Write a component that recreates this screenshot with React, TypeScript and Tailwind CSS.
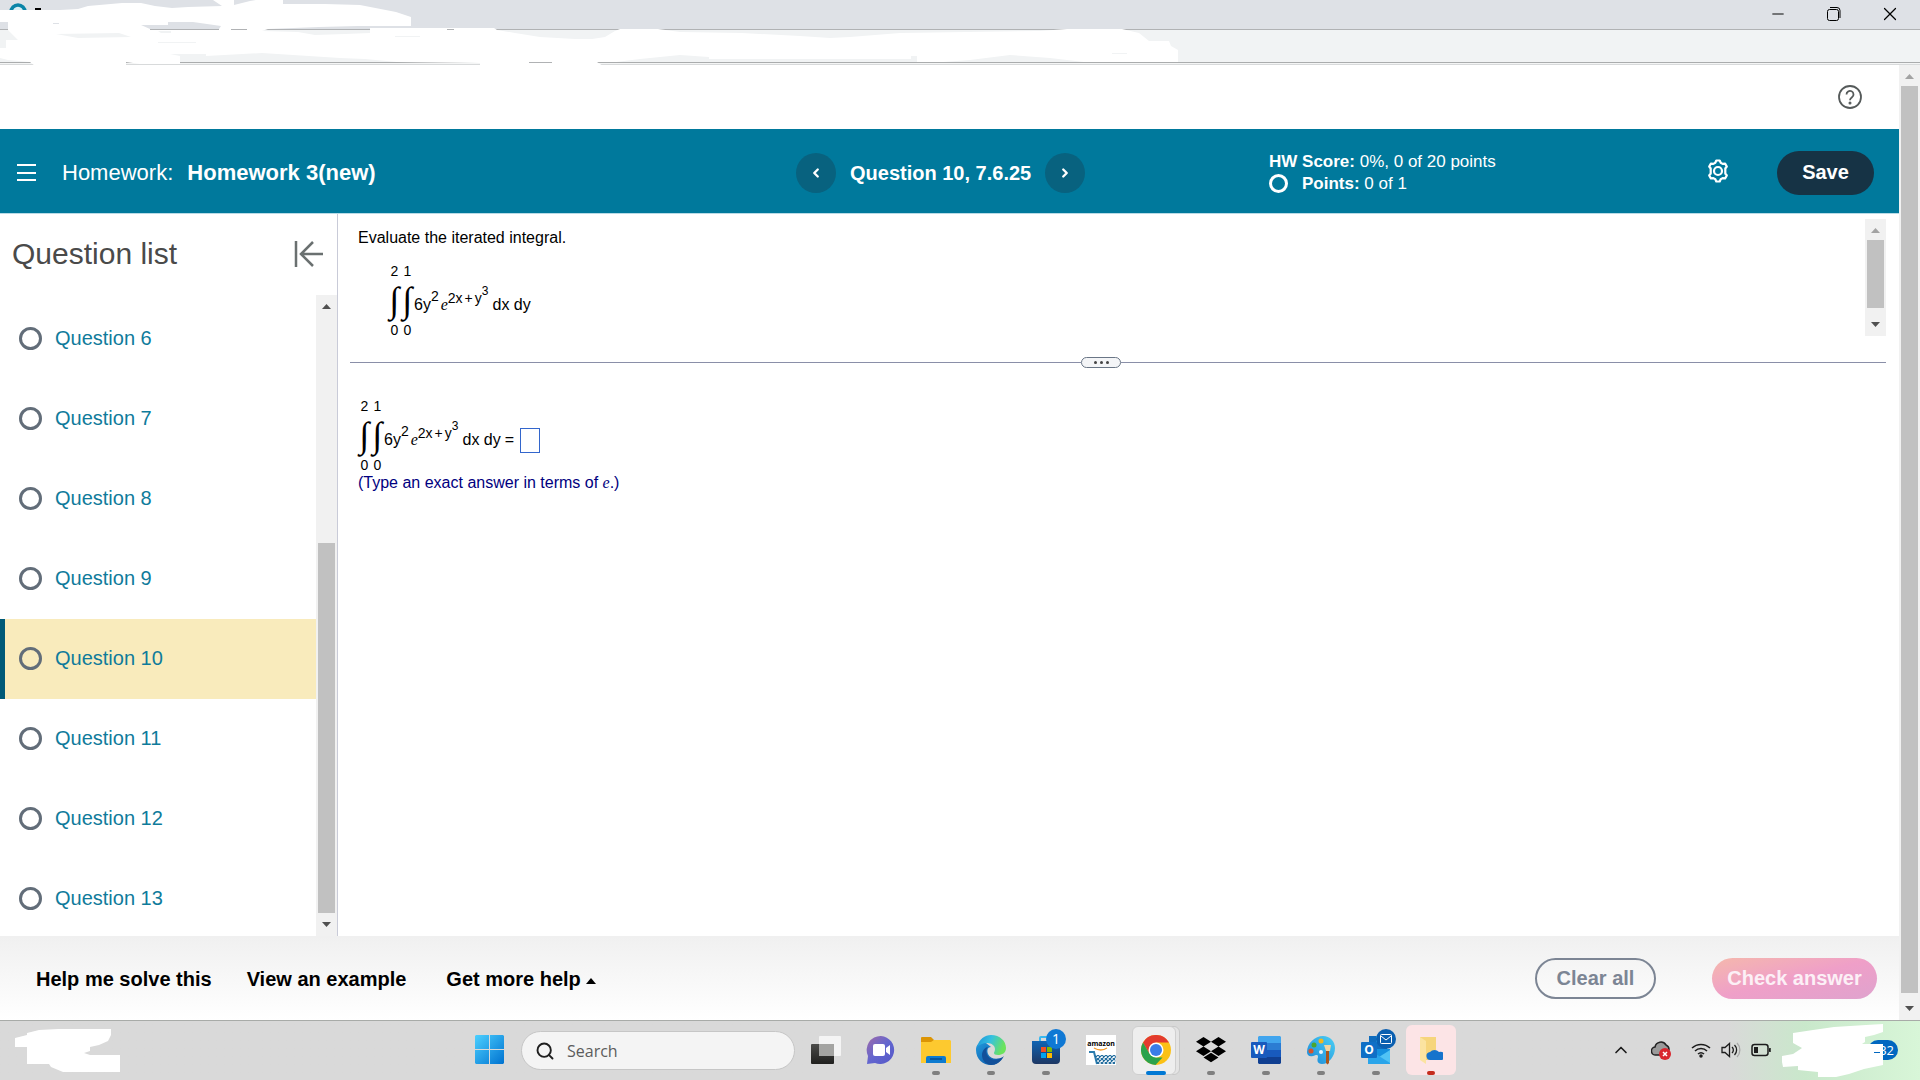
import { ReactNode } from 'react';
import { ChevronLeft, ChevronRight, ChevronUp, Minus, Search, X } from 'lucide-react';

const questions = [6, 7, 8, 9, 10, 11, 12, 13];
const activeQuestion = 10;

interface ScrollbarProps {
  before: number; // free track above the thumb
  thumb: number;
  after: number; // free track below the thumb
  atTop?: boolean;
}

const Scrollbar = ({ before, thumb, after, atTop }: ScrollbarProps) => (
  <div className="w-[21px] shrink-0 flex flex-col items-center bg-[#f1f1f1]">
    <svg width="21" height="21" className="shrink-0">
      <path d="M6 14h9L10.500 9z" fill={atTop ? '#a3a3a3' : '#505050'} />
    </svg>
    <div style={{ flexGrow: before }} />
    <div className="w-[17px] bg-[#c1c1c1]" style={{ flexGrow: thumb }} />
    <div style={{ flexGrow: after }} />
    <svg width="21" height="21" className="shrink-0">
      <path d="M6 7h9l-4.500 5z" fill="#505050" />
    </svg>
  </div>
);

const Integral = ({ from, to }: { from: string; to: string }) => (
  <span className="w-[13px] flex flex-col items-center text-sm leading-[14px]">
    <span>{to}</span>
    <span className="h-[45px] flex items-center font-['Liberation_Serif',serif] text-4xl leading-[45px]">∫</span>
    <span>{from}</span>
  </span>
);

const Expression = ({ children }: { children?: ReactNode }) => (
  <div className="flex items-center text-base">
    <Integral from="0" to="2" />
    <Integral from="0" to="1" />
    <span className="whitespace-nowrap leading-7 pt-[3px]">
      6y<span className="align-[9px] text-sm leading-none">2</span>
      <span className="font-['Liberation_Serif',serif] italic ml-0.5">e</span>
      <span className="align-[7px] text-sm leading-none">
        2x<span className="mx-0.5">+</span>y
      </span>
      <span className="align-[15px] text-xs leading-none">3</span>
      <span className="ml-1">dx dy</span>
      {children}
    </span>
  </div>
);

/* 브라우저 상단 바 */
const BrowserBar = () => (
  <div className="relative shrink-0">
    <div className="h-[30px] bg-[#dee1e6] border-b border-[#b0b2b4] flex items-start justify-end pr-0.5">
      <button aria-label="Minimize" className="w-14 h-7 flex items-center justify-center">
        <Minus className="w-[18px] h-[18px]" strokeWidth={1.3} />
      </button>
      <button aria-label="Restore" className="w-14 h-7 flex items-center justify-center">
        <svg width="14" height="14" fill="none" stroke="#000">
          <rect x="0.500" y="2.500" width="11" height="11" rx="2" />
          <path d="M3 .5h7a3 3 0 0 1 3 3V11" />
        </svg>
      </button>
      <button aria-label="Close" className="w-14 h-7 flex items-center justify-center">
        <X className="w-[22px] h-[22px]" strokeWidth={1.3} />
      </button>
    </div>
    <div className="h-[33px] bg-[#f1f3f4] border-b border-[#aaacad]" />
    <div className="h-0.5 bg-[#f4f5f5] border-b border-[#d8dadb]" />
    <svg width="1200" height="66" className="absolute left-0 top-0 pointer-events-none">
      <circle cx="18" cy="12" r="7" fill="#d7eef4" stroke="#0a84a8" strokeWidth="3.500" />
      <path d="M35 8h6v2h-6z" />
      <path
        fill="#fff"
        d="M0 10H33L43 10H60L78 9 88 6 122 3H141L155 6 172 8 188 7 222 6 213 0H234V5L250 1 256 0H283V4L325 4 360 5 396 12 411 17V26L358 26 319 27 268 29 262 31 298 32 315 35 345 34 370 33V28H494L497 30 515 33 540 37 575 39H592L605 37 615 31 620 29H658L680 32 742 33 800 36 830 38 850 37 900 33 1040 31 1067 29H1122L1139 33 1149 41H1169L1171 46 1178 50V62H1084L1050 58 1010 55 970 60 943 62H917V56H911V59H709V57L680 55 640 59 616 62H597L603 66H480V63L397 62 365 59 340 58 262 53 206 56V54H170L180 56V64H140L126 62V66H35L30 62 8 60 0 58V48H6V40H18L8 30V22H0z"
      />
      <path fill="#dee1e6" d="M141 25H168V22H193L221 26 219 29H150zM53 23h6v1h-6z" />
      <path fill="#b0b2b4" d="M150 29H219V30H150zM231 29h16v1h-16zM447 29h7v1h-7zM529 62h23v1h-23z" />
      <path fill="#f1f3f4" d="M56 34 119 33 131 37 78 38zM158 42h38v1h-38zM158 31h13v2h-10zM395 36h25v1h-25zM1112 53h15v1h-15z" />
    </svg>
  </div>
);

const Header = () => (
  <header className="h-[85px] shrink-0 bg-[#00799c] border-b border-[#b9dbe6] pt-[3px] grid grid-cols-[796fr_473fr_630fr] items-center text-white">
    <div className="flex items-center pl-[17px]">
      <button aria-label="Menu" className="w-[19px] h-[17px] flex flex-col justify-between">
        <span className="block w-full h-0.5 bg-white" />
        <span className="block w-full h-0.5 bg-white" />
        <span className="block w-full h-0.5 bg-white" />
      </button>
      <h1 className="ml-[26px] text-[22px] leading-7">
        Homework: <b className="ml-2">Homework 3(new)</b>
      </h1>
    </div>
    <div className="flex items-center gap-3.5">
      <button aria-label="Previous question" className="size-10 rounded-full bg-[#08627f] flex items-center justify-center">
        <ChevronLeft className="size-3.5" strokeWidth={4} />
      </button>
      <span className="text-xl font-bold">Question 10, 7.6.25</span>
      <button aria-label="Next question" className="size-10 rounded-full bg-[#08627f] flex items-center justify-center">
        <ChevronRight className="size-3.5" strokeWidth={4} />
      </button>
    </div>
    <div className="flex items-center pr-[25px]">
      <div className="text-[17px] leading-[22px]">
        <p><b>HW Score:</b> 0%, 0 of 20 points</p>
        <p className="flex items-center">
          <span className="size-[19px] mr-3.5 rounded-full border-[3px] border-white" />
          <span><b>Points:</b> 0 of 1</span>
        </p>
      </div>
      <button aria-label="Settings" className="ml-auto mr-[47px] mb-[3px]">
        <svg width="24" height="24" viewBox="0 0 24 24" fill="none" stroke="currentColor" strokeWidth="2.200" strokeLinejoin="round">
          <path d="M9.300 3.800 10.300 1.500h3.400l1 2.300 1.900 1.100 2.500-.3 1.700 2.900-1.500 2V14.500l1.500 2-1.700 2.900-2.500-.3-1.900 1.100-1 2.300h-3.400l-1-2.300-1.900-1.100-2.500.3-1.700-2.900 1.500-2v-5l-1.500-2 1.700-2.900 2.500.3z" />
          <circle cx="12" cy="12" r="4" />
        </svg>
      </button>
      <button className="w-[97px] h-11 rounded-full bg-[#163345] pb-0.5 text-xl font-bold">Save</button>
    </div>
  </header>
);

const Sidebar = () => (
  <aside className="w-[338px] shrink-0 border-r border-[#c9cbd8] flex flex-col">
    <div className="h-[81px] shrink-0 pl-3 pr-3.5 pb-0.5 flex items-center justify-between text-[#4a4a4a]">
      <h2 className="text-3xl">Question list</h2>
      <button aria-label="Collapse list">
        <svg width="29" height="26" fill="none" stroke="#6a7070" strokeWidth="2.500">
          <path d="M2 0v26M19 1 7 13l12 12M7 13h22" />
        </svg>
      </button>
    </div>
    <div className="flex-1 min-h-0 flex">
      <ul className="flex-1 overflow-hidden pt-1">
        {questions.map((q) => (
          <li key={q}>
            <a
              href={`#q${q}`}
              className={
                q === activeQuestion
                  ? 'h-20 pl-3.5 pb-0.5 flex items-center gap-[13px] border-l-5 border-[#005a78] bg-[#f9ebbc] text-xl text-[#0f7b9b]'
                  : 'h-20 pl-3.5 pb-0.5 flex items-center gap-[13px] border-l-5 border-transparent text-xl text-[#0f7b9b]'
              }
            >
              <span className="size-[23px] rounded-full border-[3px] border-[#626d79]" />
              Question {q}
            </a>
          </li>
        ))}
      </ul>
      <Scrollbar before={227} thumb={370} after={2} />
    </div>
  </aside>
);

const Worksheet = () => (
  <main className="flex-1 pl-3 pr-[13px] pt-[5px] text-black">
    <section className="flex h-[117px]">
      <div className="flex-1 pl-2 pt-[9px]">
        <p className="text-base leading-5">Evaluate the iterated integral.</p>
        <div className="pl-[30px] pt-4">
          <Expression />
        </div>
      </div>
      <Scrollbar before={0} thumb={68} after={7} atTop />
    </section>
    <div className="mt-5 h-3 flex items-center">
      <div className="flex-1 h-px bg-[#8a8fa8]" />
      <button aria-label="Resize" className="w-10 h-[11px] rounded-full border border-[#6a7686] bg-[#f4f5f7] flex items-center justify-center gap-[3px]">
        <span className="size-[3px] rounded-full bg-[#444]" />
        <span className="size-[3px] rounded-full bg-[#444]" />
        <span className="size-[3px] rounded-full bg-[#444]" />
      </button>
      <div className="w-[765px] h-px bg-[#8a8fa8]" />
    </div>
    <section className="pl-2 pt-[31px]">
      <Expression>
        <label htmlFor="answer" className="ml-1">=</label>
        <input id="answer" className="ml-1.5 w-5 h-[25px] border border-[#3366cc] bg-white align-middle" />
      </Expression>
      <p className="pt-px text-base leading-5 text-[#000080]">
        (Type an exact answer in terms of <i className="font-['Liberation_Serif',serif]">e</i>.)
      </p>
    </section>
  </main>
);

const Footer = () => (
  <footer className="h-[84px] shrink-0 flex items-center pl-9 pr-[22px] bg-linear-to-b from-[#f0f0f0] to-white text-xl font-bold text-black">
    <button className="pt-0.5">Help me solve this</button>
    <button className="pt-0.5 ml-[35px]">View an example</button>
    <button className="pt-0.5 ml-10 flex items-center">
      Get more help
      <svg width="10" height="6" className="ml-[5px] mt-1"><path d="M0 6h10L5 0z" /></svg>
    </button>
    <button className="ml-auto w-[121px] h-[41px] rounded-full border-2 border-[#7c8594] text-[#7c8594]">Clear all</button>
    <button className="ml-14 w-[165px] h-[41px] rounded-full bg-linear-to-br from-[#f5b8ac] via-[#ef9fc8] to-[#dfa3ce] text-[#fcf0f6]">
      Check answer
    </button>
  </footer>
);

interface TaskIconProps {
  label: string;
  dot?: boolean;
  children: ReactNode;
}

const TaskIcon = ({ label, dot, children }: TaskIconProps) => (
  <button aria-label={label} className="relative w-[55px] h-full pb-0.5 flex items-center justify-center">
    {children}
    {dot && <span className="absolute bottom-[5px] w-2 h-1 rounded-full bg-[#7f7f7f]" />}
  </button>
);

/* 작업 표시줄 */
const Taskbar = () => (
  <div className="h-[60px] shrink-0 border-t border-[#a8aba8] bg-[#d9d9d9] bg-linear-to-r from-[#d9d9d9] from-90% via-[#c9e8cb] via-94% to-[#d8f6d8] grid grid-cols-[1fr_auto_1fr] font-['Open_Sans','Noto_Sans',sans-serif]">
    <div className="pl-[15px] flex items-center">
      <svg width="106" height="44" fill="#fff">
        <path d="M0 9 12 6V4L24 1 43 0H96V6L93 12 84 16 75 18V22L69 24 75 26H105V43H48L36 38 34 35H12V18H0z" />
      </svg>
    </div>

    <div className="flex items-center">
      <TaskIcon label="Start">
        <svg width="29" height="29">
          <defs>
            <linearGradient id="win" x1="0" y1="0" x2="1" y2="1" gradientUnits="objectBoundingBox">
              <stop offset="0" stopColor="#4cd0ff" /><stop offset="1" stopColor="#0072d0" />
            </linearGradient>
          </defs>
          <path fill="url(#win)" d="M1 0h13v14H0V1zM15 0h13l1 1v13H15zM0 15h14v14H1l-1-1zM15 15h14v13l-1 1H15z" />
        </svg>
      </TaskIcon>
      <label className="ml-1 mr-[3px] w-[274px] h-[39px] rounded-full bg-[#f4f4f4] border border-[#c6c6c6] flex items-center pl-[13px] pr-3">
        <Search className="size-5 shrink-0 text-[#1f1f1f]" strokeWidth={2.3} />
        <input
          placeholder="Search"
          aria-label="Search"
          className="ml-3 w-full bg-transparent text-base placeholder:text-[#5c5c5c] outline-none"
        />
      </label>

      <TaskIcon label="Task view">
        <svg width="30" height="30">
          <defs>
            <linearGradient id="tv" x1="0" y1="0" x2="0" y2="1"><stop stopColor="#4a4a48" /><stop offset="1" stopColor="#20201e" /></linearGradient>
          </defs>
          <rect x="0" y="9" width="23" height="20" rx="1" fill="url(#tv)" />
          <rect x="8" y="1" width="22" height="20" rx="1" fill="#f4f4f4" />
          <path d="M8 9h15v12H8z" fill="#a4a4a2" />
        </svg>
      </TaskIcon>
      <TaskIcon label="Chat">
        <svg width="30" height="30">
          <defs>
            <linearGradient id="chat" x1="0" y1="0" x2="1" y2="1">
              <stop stopColor="#a06aa8" /><stop offset=".5" stopColor="#6366cf" /><stop offset="1" stopColor="#5558c8" />
            </linearGradient>
          </defs>
          <path d="M15 1a14 14 0 1 1-6 27L1 29l1-8A14 14 0 0 1 15 1z" fill="url(#chat)" />
          <rect x="7" y="9" width="12" height="12" rx="2" fill="#fff" />
          <path d="M20 13l4-3v10l-4-3z" fill="#fff" />
        </svg>
      </TaskIcon>
      <TaskIcon label="File Explorer" dot>
        <svg width="30" height="28">
          <path d="M0 2a1 1 0 0 1 1-1h9l3 3-2 5H0z" fill="#dc9505" />
          <path d="M0 6h10l3-2h16l1 1v22H0z" fill="#fdc92f" />
          <path d="M5 27v-5a2 2 0 0 1 2-2h16a2 2 0 0 1 2 2v5z" fill="#0d7bd0" />
          <path d="M9 23h12" stroke="#084a8c" strokeWidth="1.500" />
        </svg>
      </TaskIcon>
      <TaskIcon label="Edge" dot>
        <svg width="30" height="30">
          <defs>
            <linearGradient id="edgeA" x1="0" y1="0" x2="1" y2=".3">
              <stop stopColor="#1a90d8" /><stop offset=".5" stopColor="#35c1e0" /><stop offset="1" stopColor="#6be35c" />
            </linearGradient>
            <linearGradient id="edgeB" x1="0" y1="0" x2="1" y2="1"><stop stopColor="#2098dc" /><stop offset="1" stopColor="#0b4fa0" /></linearGradient>
          </defs>
          <path d="M0 15C0 8 5 7 10 8l5 4c-4 0-4 4-3 7 2 5 9 6 15 3-3 5-7 8-12 8C7 30 0 24 0 15z" fill="url(#edgeB)" />
          <path d="M12 12c-3 3-2 9 3 12 4 2 9 1 13-3-3 6-8 9-13 9-6-1-9-5-9-10 0-4 3-8 6-8z" fill="#12509a" />
          <path d="M1 12C3 4 9 0 15 0c9 0 15 6 15 13 0 5-4 7-8 7-3 0-4-1-4-2s1-2 1-4c0-3-3-6-8-6-4 0-8 2-10 4z" fill="url(#edgeA)" />
        </svg>
      </TaskIcon>
      <TaskIcon label="Store" dot>
        <svg width="30" height="30">
          <defs>
            <linearGradient id="store" x1="0" y1="0" x2="0" y2="1"><stop stopColor="#0f64b4" /><stop offset="1" stopColor="#1d3763" /></linearGradient>
          </defs>
          <path d="M9 7V3a1 1 0 0 1 1-1h10v5" fill="none" stroke="#38b8f0" strokeWidth="2" />
          <path d="M1 6h28v19a4 4 0 0 1-4 4H5a4 4 0 0 1-4-4z" fill="url(#store)" />
          <path d="M10 12h5v5h-5z" fill="#f25022" /><path d="M16 12h5v5h-5z" fill="#7fba00" />
          <path d="M10 18h5v5h-5z" fill="#00a4ef" /><path d="M16 18h5v5h-5z" fill="#ffb900" />
        </svg>
        <span className="absolute top-2 right-[7px] size-5 rounded-full bg-[#0f78d4] text-white text-sm leading-5 text-center">1</span>
      </TaskIcon>
      <TaskIcon label="Amazon">
        <svg width="30" height="30">
          <defs>
            <pattern id="net" width="4" height="4" patternUnits="userSpaceOnUse"><path d="M0 0l4 4M4 0L0 4" stroke="#1d6a9c" strokeWidth="1.200" /></pattern>
          </defs>
          <path d="M0 0h30v30H0z" fill="#fff" />
          <text x="15" y="11" textAnchor="middle" fontSize="7" fontWeight="700">amazon</text>
          <path d="M8 13q7 4 13 0" fill="none" stroke="#f49a2a" strokeWidth="1.300" />
          <path d="M3 17h5l3 12" fill="none" stroke="#2a7cae" strokeWidth="2" />
          <path d="M9 20h21l-1 9H11z" fill="url(#net)" />
        </svg>
      </TaskIcon>
      <button aria-label="Chrome" className="relative w-[55px] h-full pb-0.5 flex items-center justify-center">
        <span className="absolute left-3 top-[5px] w-10 h-[49px] rounded-md bg-[#e4e4e4] border border-[#c8c8c8]" />
        <span className="absolute left-1 top-[5px] w-[44px] h-[49px] rounded-md bg-[#eeeeee] border border-[#cfcfcf]" />
        <svg width="30" height="30" className="relative">
          <circle cx="15" cy="15" r="15" fill="#fbc116" />
          <path d="M2 7.500A15 15 0 0 1 28 7.500H15L8.500 19z" fill="#e33b2e" />
          <path d="M2 7.500 8.500 18.700 15 22.500h6.500L14.500 30A15 15 0 0 1 2 7.500z" fill="#2ba24c" />
          <circle cx="15" cy="15" r="7.500" fill="#fff" />
          <circle cx="15" cy="15" r="6" fill="#3a7de8" />
        </svg>
        <span className="absolute bottom-[5px] w-5 h-1 rounded-full bg-[#0078d4]" />
      </button>
      <TaskIcon label="Dropbox" dot>
        <svg width="30" height="26">
          <path d="M7.500 0 15 4.700 7.500 9.400 0 4.700zM22.500 0 30 4.700 22.500 9.400 15 4.700zM0 14.200 7.500 9.500 15 14.200 7.500 18.900zM22.500 9.500 30 14.200 22.500 18.900 15 14.200zM7.500 20.500 15 15.800l7.500 4.700L15 25.200z" />
        </svg>
      </TaskIcon>
      <TaskIcon label="Word" dot>
        <svg width="30" height="28">
          <path d="M8 0h21l1 1v6H7V1z" fill="#41a5ee" /><path d="M7 7h23v7H7z" fill="#2b7cd3" />
          <path d="M7 14h23v7H7z" fill="#185abd" /><path d="M7 21h23v6l-1 1H8l-1-1z" fill="#103f91" />
          <rect y="6" width="16" height="16" rx="1" fill="#185abd" />
          <text x="8" y="18" textAnchor="middle" fontSize="12" fontWeight="700" fill="#fff">W</text>
        </svg>
      </TaskIcon>
      <TaskIcon label="Paint" dot>
        <svg width="30" height="30">
          <defs><linearGradient id="paint" x1="0" y1="1" x2="1" y2="0"><stop stopColor="#1a86d6" /><stop offset="1" stopColor="#4cd0f4" /></linearGradient></defs>
          <path d="M17 1c7 0 12 5 12 12 0 8-6 16-13 16-5 0-5-4-4-7 0-3-2-2-5-1-4 1-6-1-6-4C1 8 9 1 17 1z" fill="url(#paint)" />
          <circle cx="15" cy="17" r="2" fill="#e8f4fa" />
          <circle cx="15" cy="6" r="2.500" fill="#f4b71c" /><circle cx="8" cy="10" r="2.500" fill="#4ba52e" />
          <circle cx="5" cy="16" r="2.500" fill="#d8542b" />
          <path d="M18 10h7l-1 6h-4z" fill="#f2d3a0" /><path d="M20 16h3v12l-1.500 1.500L20 28z" fill="#a8561c" />
        </svg>
      </TaskIcon>
      <TaskIcon label="Outlook" dot>
        <svg width="30" height="28">
          <path d="M8 0h18v14H8z" fill="#0f6cbd" /><path d="M15 0h11v7H15z" fill="#28a8ea" />
          <path d="M7 13h22v15H7z" fill="#1490df" /><path d="M7 28 29 14v14z" fill="#50c3f5" /><path d="M7 13l22 14v1H7z" fill="#2aa5ea" />
          <rect y="6" width="16" height="16" rx="1" fill="#0f6fc6" />
          <text x="8" y="18" textAnchor="middle" fontSize="12" fontWeight="700" fill="#fff">O</text>
        </svg>
        <svg width="20" height="20" className="absolute top-2 right-[7px]" fill="none" stroke="#fff">
          <circle cx="10" cy="10" r="10" fill="#0a5fb0" stroke="none" />
          <rect x="4.500" y="5.500" width="11" height="9" rx="1" />
          <path d="M5 7l5 4 5-4" />
        </svg>
      </TaskIcon>
      <button aria-label="OneDrive folder" className="relative w-[55px] h-full pb-0.5 flex items-center justify-center">
        <span className="absolute w-[50px] h-[50px] rounded-md bg-[#fce4e6]" />
        <svg width="24" height="28" className="relative">
          <path d="M1 1h16v23H1z" fill="#f6d57c" /><path d="M1 1l6 4v23l-6-4z" fill="#fbe3a0" />
          <path d="M12 24a4 4 0 0 1-1-8 6 6 0 0 1 9 0 4 4 0 0 1 3 8z" fill="#1573cc" />
        </svg>
        <span className="absolute bottom-[5px] w-2 h-1 rounded-full bg-[#c42b1c]" />
      </button>
    </div>

    {/* 시스템 트레이 */}
    <div className="pb-0.5 flex items-center justify-end text-[#1c1c1c]">
      <button aria-label="Show hidden icons" className="mr-5">
        <ChevronUp className="size-5" strokeWidth={2} />
      </button>
      <svg width="20" height="20" className="mr-5">
        <path d="M5 15a4 4 0 0 1-1-8 6 6 0 0 1 11-2 5 5 0 0 1 3 5l-4 5z" fill="#9a9a9a" stroke="#222" strokeWidth="1.500" />
        <circle cx="14" cy="14" r="6" fill="#d9252d" />
        <path d="M12 12l4 4M16 12l-4 4" stroke="#fff" strokeWidth="1.500" />
      </svg>
      <svg width="20" height="16" className="mr-2.5" fill="none" stroke="currentColor" strokeWidth="1.500">
        <path d="M1 6a13 13 0 0 1 18 0M4 9a8.500 8.500 0 0 1 12 0M7 12a4.500 4.500 0 0 1 6 0" />
        <circle cx="10" cy="14" r="1" fill="currentColor" />
      </svg>
      <svg width="20" height="16" className="mr-2.5" fill="none" stroke="currentColor" strokeWidth="1.300">
        <path d="M1 5.500h3L8.500 1.500v13L4 10.500H1zM11 5a4 4 0 0 1 0 6M13.500 3a7 7 0 0 1 0 10" />
        <path d="M16 1a10 10 0 0 1 0 14" stroke="#a9a9a9" />
      </svg>
      <svg width="20" height="14" className="mr-[11px]" fill="none" stroke="currentColor" strokeWidth="1.500">
        <rect x="1" y="1.500" width="16" height="11" rx="2.500" />
        <path d="M3 4h4v6H3zM18 5.500h1v3h-1z" fill="currentColor" stroke="none" />
        <path d="M19 5v4" />
      </svg>
      <div className="relative w-[138px] h-full flex items-center">
        <span className="ml-[86px] w-[30px] h-5 rounded-full bg-[#0067c0] text-white text-[13px] leading-5 pr-1 text-right">32</span>
        <svg width="103" height="56" className="absolute left-0 top-[3px]" fill="#fff">
          <path d="M11 9 31 6 52 3 84 1 101 0V8L92 11 83 13V18L80 20H101V41L82 45 67 50 54 53H36V48L16 46V42L1 43 0 38V32L11 30 20 24 11 19z" />
          <path d="M92 28h6v1h-6z" fill="#0067c0" />
        </svg>
      </div>
    </div>
  </div>
);

export default function App() {
  return (
    <div className="h-screen flex flex-col bg-white font-['Liberation_Sans',Arial,sans-serif] overflow-hidden">
      <BrowserBar />
      <div className="flex-1 min-h-0 flex">
        <div className="flex-1 flex flex-col min-w-0">
          <div className="h-16 shrink-0 flex items-center justify-end pr-[37px]">
            <button aria-label="Help">
              <svg width="24" height="24" fill="none" stroke="#555a5a" strokeWidth="1.800">
                <circle cx="12" cy="12" r="11" />
                <path d="M8.500 9.500a3.500 3.500 0 1 1 5.500 2.800c-1.300 1-2 1.400-2 3" />
                <circle cx="12" cy="18" r=".6" fill="#555a5a" />
              </svg>
            </button>
          </div>
          <Header />
          <div className="flex-1 min-h-0 flex">
            <Sidebar />
            <Worksheet />
          </div>
          <Footer />
        </div>
        <Scrollbar before={0} thumb={907} after={6} atTop />
      </div>
      <Taskbar />
    </div>
  );
}
